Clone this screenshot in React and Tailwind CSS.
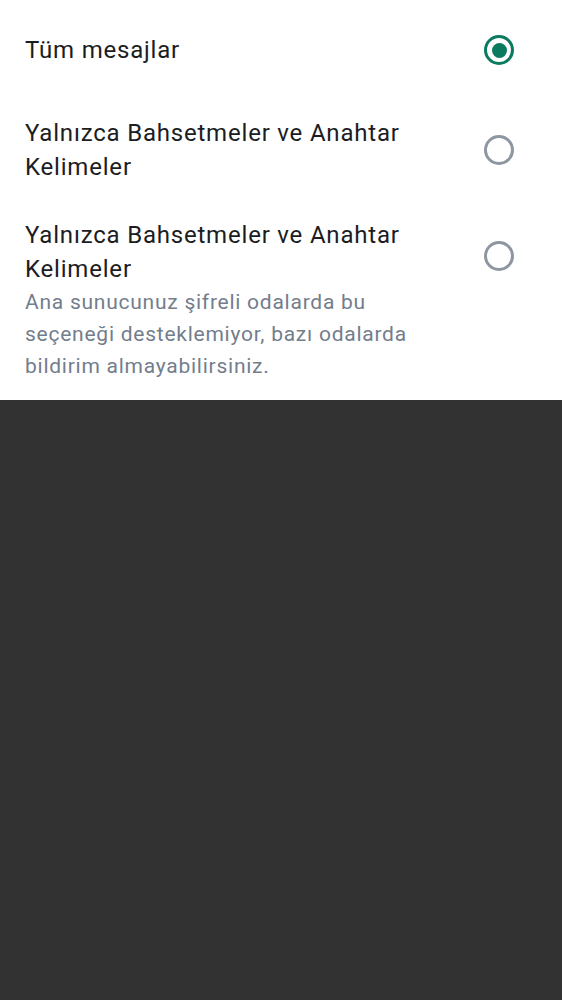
import React from "react";

function Radio({ checked, className = "" }) {
  return (
    <div className={"flex h-[30px] w-[30px] shrink-0 items-center justify-center " + className}>
      {checked ? (
        <div className="flex h-[30px] w-[30px] items-center justify-center rounded-full border-[3px] border-[#0b7b5f]">
          <div className="h-[15px] w-[15px] rounded-full bg-[#0b7b5f]" />
        </div>
      ) : (
        <div className="h-[30px] w-[30px] rounded-full border-[3px] border-[#8d96a1]" />
      )}
    </div>
  );
}

const title = "flex-1 pr-[54px] text-[24px] leading-[34px] tracking-[0.8px] text-[#1b1d22]";

export default function App() {
  return (
    <div className="flex min-h-[1000px] flex-col bg-[#323232]" style={{ fontFamily: "Roboto, 'Noto Sans', sans-serif" }}>
      <div className="bg-white">
        <div className="flex h-[100px] items-center pl-[25px] pr-[48px]">
          <div className={title}>Tüm mesajlar</div>
          <Radio checked />
        </div>
        <div className="flex h-[100px] items-center pl-[25px] pr-[48px]">
          <div className={title}>Yalnızca Bahsetmeler ve Anahtar Kelimeler</div>
          <Radio />
        </div>
        <div className="flex h-[200px] flex-col justify-center pl-[25px] pr-[48px]">
          <div className="flex items-center">
            <div className={title}>Yalnızca Bahsetmeler ve Anahtar Kelimeler</div>
            <Radio className="mt-[8px]" />
          </div>
          <div className="pr-[84px] text-[21px] leading-[32px] tracking-[0.75px] text-[#737d8c]">
            Ana sunucunuz şifreli odalarda bu seçeneği desteklemiyor, bazı odalarda bildirim almayabilirsiniz.
          </div>
        </div>
      </div>
    </div>
  );
}
